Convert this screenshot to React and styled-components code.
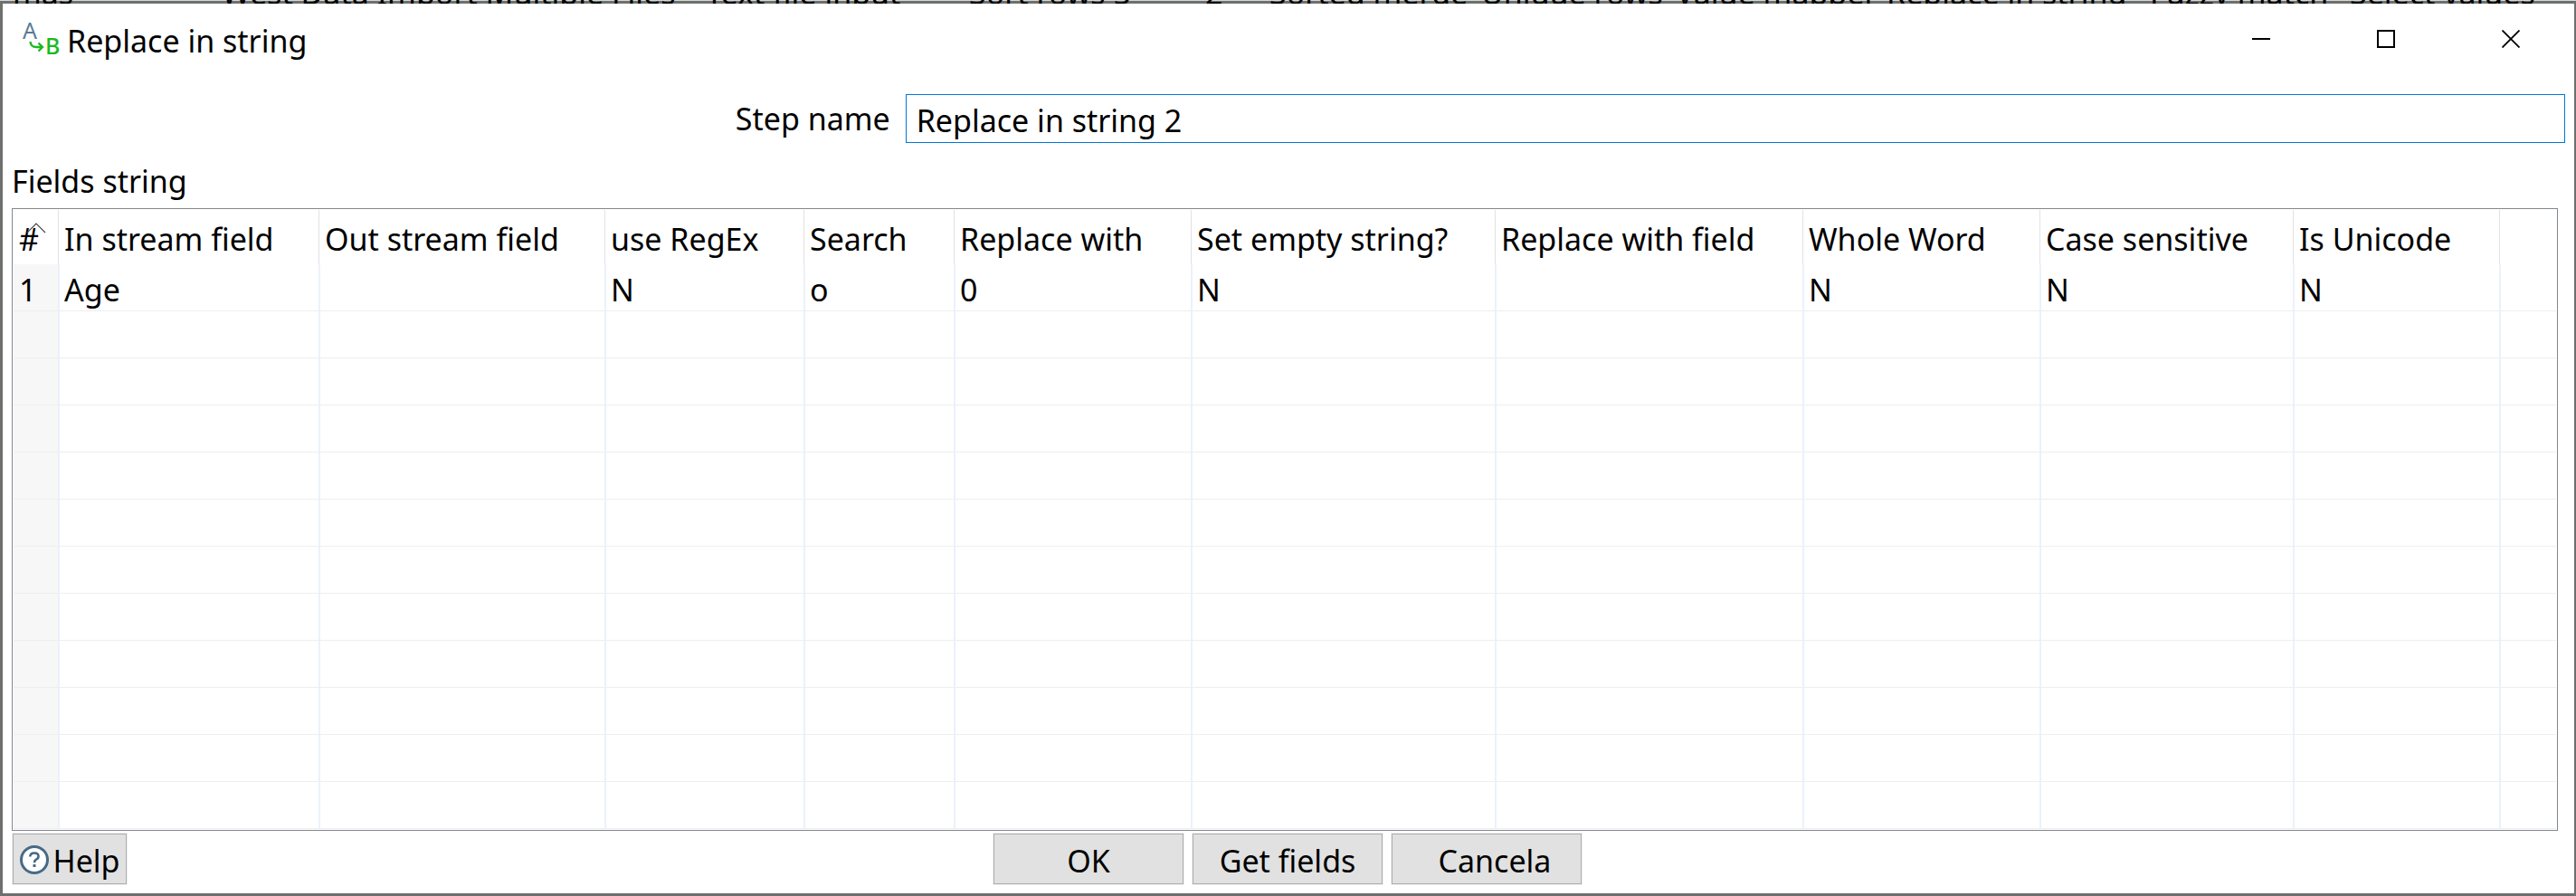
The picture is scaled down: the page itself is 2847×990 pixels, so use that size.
import React from "react";
import styled, { createGlobalStyle } from "styled-components";

const GlobalStyle = createGlobalStyle`
  * { box-sizing: border-box; }
  body {
    margin: 0;
    background: #6e706e;
    color: #000;
    font: 34px/48px "Noto Sans", "Open Sans", sans-serif;
  }
  button, input { font: inherit; color: inherit; }
`;

const Page = styled.div`
  min-height: 100vh;
  display: flex;
  flex-direction: column;
  overflow: hidden;
`;

const Backdrop = styled.div`
  height: 4px;
  overflow: hidden;
  display: grid;
  grid-template-rows: 4px;
  grid-template-columns: 14fr 231fr 535fr 291fr 261fr 71fr 234fr 215fr 233fr 291fr 221fr 250fr;
  align-items: end;
  background: linear-gradient(#d3d9d6 1px, #6e706e 1px);
  line-height: 24px;
  white-space: nowrap;
`;

const StepLabel = styled.span`
  min-width: 0;
`;

const Dialog = styled.main`
  flex: 1;
  display: flex;
  flex-direction: column;
  margin: 0 2px 3px 3px;
  background: #fff;
`;

const TitleBar = styled.header`
  display: flex;
  align-items: center;
  height: 78px;
  padding: 0 1px 0 22px;
`;

const TitleIcon = styled.svg`
  width: 42px;
  height: 42px;
  flex: none;
`;

const Title = styled.h1`
  flex: 1;
  margin: 0;
  padding: 4px 0 0 7px;
  font-size: 34px;
  font-weight: 400;
`;

const WindowButton = styled.button`
  width: 138px;
  height: 78px;
  padding: 0;
  border: 0;
  background: none;
  display: flex;
  align-items: center;
  justify-content: center;
`;

const StepRow = styled.div`
  display: grid;
  grid-template-columns: 35fr 65fr;
  align-items: center;
  padding: 22px 10px 0;
`;

const Label = styled.label`
  text-align: right;
  padding-right: 17px;
`;

const TextBox = styled.input`
  width: 100%;
  height: 54px;
  padding: 3px 12px 0 11px;
  border: 1px solid #0078d7;
  background: #fff;
  outline: 0;
`;

const TableTitle = styled.h2`
  margin: 18px 0 6px 10px;
  font-size: 34px;
  font-weight: 400;
`;

const TableFrame = styled.div`
  margin: 0 18px 0 10px;
  padding: 1px;
  border: 1px solid #828790;
`;

const Table = styled.table`
  width: 100%;
  table-layout: fixed;
  border-collapse: separate;
  border-spacing: 0;
  text-align: left;
  white-space: nowrap;
`;

const Column = styled.col`
  width: ${(p) => (p.$width ? `${p.$width}px` : "auto")};
`;

const HeadCell = styled.th`
  position: relative;
  height: 60px;
  padding: 3px 0 0 ${(p) => (p.$index ? 6 : 5)}px;
  font-weight: 400;
  border-right: 1px solid #fff;
  box-shadow: inset -1px 0 #e2e2e2;

  &:last-child { border: 0; box-shadow: none; }
`;

const SortMark = styled.svg`
  position: absolute;
  left: 14px;
  top: 14px;
  width: 22px;
  height: 12px;
`;

const Cell = styled.td`
  height: 52px;
  padding: 5px 0 0 ${(p) => (p.$index ? 6 : 5)}px;
  line-height: 46px;
  background: ${(p) => (p.$index ? "#f7f7f7" : "#fff")};
  border-right: 2px solid #ebf1fb;
  border-bottom: 1px solid #eee;

  &:last-child { border-right: 0; }
`;

const Footer = styled.footer`
  display: grid;
  grid-template-columns: 1fr auto 1fr;
  align-items: center;
  padding: 3px 12px 10px 10px;
`;

const Actions = styled.div`
  display: flex;
  gap: 10px;
`;

const Button = styled.button`
  width: ${(p) => (p.$compact ? 126 : 210)}px;
  height: 56px;
  margin-left: ${(p) => (p.$compact ? 1 : 0)}px;
  padding: 3px 0 0 ${(p) => (p.$indent ? 18 : 0)}px;
  display: flex;
  align-items: center;
  justify-content: center;
  gap: 3px;
  border: 1px solid #adadad;
  background: #e1e1e1;
  box-shadow: 0 0 0 1px #f0f0f0;
`;

const HelpIcon = styled.svg`
  width: 34px;
  height: 34px;
  flex: none;
`;

const backdropSteps = [
  "", "mas", "West Data Import Multiple Files", "Text file input", "Sort rows 5", "2", "Sorted merge",
  "Unique rows", "Value mapper", "Replace in string", "Fuzzy match", "Select values",
];

const columns = [
  { name: "#", width: 51 },
  { name: "In stream field", width: 288 },
  { name: "Out stream field", width: 316 },
  { name: "use RegEx", width: 220 },
  { name: "Search", width: 166 },
  { name: "Replace with", width: 262 },
  { name: "Set empty string?", width: 336 },
  { name: "Replace with field", width: 340 },
  { name: "Whole Word", width: 262 },
  { name: "Case sensitive", width: 280 },
  { name: "Is Unicode", width: 228 },
  { name: "" },
];

const firstRow = ["1", "Age", "", "N", "o", "0", "N", "", "N", "N", "N", ""];
const rows = [firstRow, ...Array.from({ length: 11 }, () => columns.map(() => ""))];

export default function App() {
  return (
    <Page>
      <GlobalStyle />
      <Backdrop aria-hidden="true">
        {backdropSteps.map((step, i) => (
          <StepLabel key={i}>{step}</StepLabel>
        ))}
      </Backdrop>
      <Dialog>
        <TitleBar>
          <TitleIcon viewBox="0 0 42 42" aria-hidden="true">
            <text x="0" y="21" fontSize="25" fill="#587b98">A</text>
            <text x="25" y="38" fontSize="25" fontWeight="500" fill="#1cb923">B</text>
            <path d="M8.500 24 Q9 30 15 30 H21 M17.500 25.500 L22 30 L17.500 34.500" fill="none" stroke="#1cb923" strokeWidth="2.400" />
          </TitleIcon>
          <Title>Replace in string</Title>
          <WindowButton aria-label="Minimize">
            <svg width="20" height="20" aria-hidden="true">
              <path d="M0 10H20" stroke="#000" strokeWidth="2" />
            </svg>
          </WindowButton>
          <WindowButton aria-label="Maximize">
            <svg width="20" height="20" aria-hidden="true">
              <rect x="1" y="1" width="18" height="18" fill="none" stroke="#000" strokeWidth="2" />
            </svg>
          </WindowButton>
          <WindowButton aria-label="Close">
            <svg width="20" height="20" aria-hidden="true">
              <path d="M.5 .5L19.500 19.500M19.500 .5L.5 19.500" stroke="#000" strokeWidth="1.800" />
            </svg>
          </WindowButton>
        </TitleBar>

        <StepRow>
          <Label htmlFor="step-name">Step name</Label>
          <TextBox id="step-name" defaultValue="Replace in string 2" />
        </StepRow>

        <TableTitle id="fields-title">Fields string</TableTitle>
        <TableFrame>
          <Table aria-labelledby="fields-title">
            <colgroup>
              {columns.map((c, i) => (
                <Column key={i} $width={c.width} />
              ))}
            </colgroup>
            <thead>
              <tr>
                {columns.map((c, i) => (
                  <HeadCell key={i} scope="col" $index={i === 0}>
                    {c.name}
                    {i === 0 && (
                      <SortMark viewBox="0 0 22 12" aria-hidden="true">
                        <path d="M1 11L11 1L21 11" fill="none" stroke="#444" strokeWidth="1.200" />
                      </SortMark>
                    )}
                  </HeadCell>
                ))}
              </tr>
            </thead>
            <tbody>
              {rows.map((row, r) => (
                <tr key={r}>
                  {row.map((value, i) => (
                    <Cell key={i} $index={i === 0}>{value}</Cell>
                  ))}
                </tr>
              ))}
            </tbody>
          </Table>
        </TableFrame>

        <Footer>
          <Button $compact>
            <HelpIcon viewBox="0 0 34 34" aria-hidden="true">
              <circle cx="17" cy="16" r="14.500" fill="#fff" stroke="#466a88" strokeWidth="3" />
              <path d="M12.200 12.500Q12.500 8.500 17 8.500Q21.500 8.500 21.500 12.200Q21.500 14.500 19 15.700Q17 16.700 17 19.200" fill="none" stroke="#466a88" strokeWidth="2.600" />
              <rect x="15.500" y="21" width="3" height="3" fill="#466a88" />
            </HelpIcon>
            Help
          </Button>
          <Actions>
            <Button>OK</Button>
            <Button>Get fields</Button>
            <Button $indent>Cancela</Button>
          </Actions>
        </Footer>
      </Dialog>
    </Page>
  );
}
